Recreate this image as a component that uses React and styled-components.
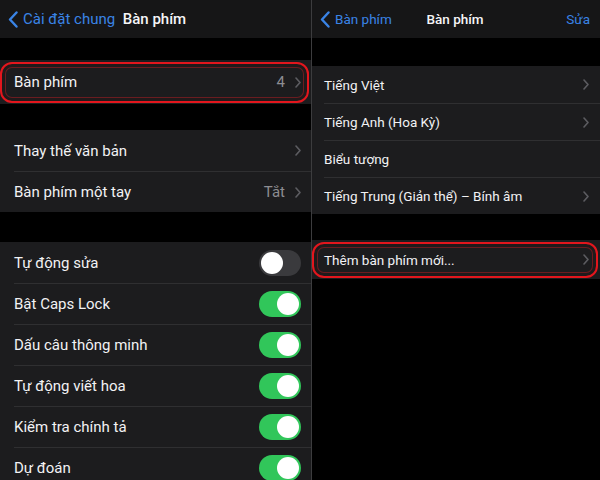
import styled, { createGlobalStyle } from "styled-components";

const GlobalStyle = createGlobalStyle`
  html, body {
    margin: 0;
    padding: 0;
    background: #000;
  }
  body {
    font-family: Roboto, Inter, "Noto Sans", "Liberation Sans", sans-serif;
    -webkit-font-smoothing: antialiased;
  }
`;

const Screen = styled.div`
  display: flex;
  width: 600px;
  height: 480px;
  overflow: hidden;
  background: #000;
`;

const Panel = styled.div`
  display: flex;
  flex-direction: column;
  width: ${(p) => p.$width};
  flex-shrink: 0;
  font-size: ${(p) => p.$size}px;
  color: #f2f2f4;
`;

const Divider = styled.div`
  width: 1px;
  background: #3c3c3e;
  flex-shrink: 0;
`;

const NavBar = styled.div`
  display: grid;
  grid-template-columns: 1fr auto 1fr;
  align-items: center;
  height: 38px;
  padding: 0 10px 0 8px;
  background: #161617;
  flex-shrink: 0;
`;

const BackLink = styled.div`
  display: flex;
  align-items: center;
  gap: 5px;
  color: #3a84e6;
  white-space: nowrap;
`;

const NavTitle = styled.div`
  font-weight: 500;
  color: #f5f5f7;
  white-space: nowrap;
`;

const NavAction = styled.div`
  justify-self: end;
  color: #3a84e6;
`;

const Spacer = styled.div`
  height: ${(p) => p.$h}px;
  flex-shrink: 0;
`;

const Group = styled.div`
  background: #1c1c1e;
  flex-shrink: 0;
`;

const Row = styled.div`
  position: relative;
  display: flex;
  padding-left: ${(p) => p.$pl}px;
`;

const RowBody = styled.div`
  flex: 1;
  display: flex;
  align-items: center;
  justify-content: space-between;
  height: ${(p) => p.$h}px;
  padding-right: ${(p) => p.$pr}px;
  border-top: ${(p) => (p.$first ? "none" : "1px solid #2f2f31")};
  box-sizing: border-box;
`;

const Label = styled.span`
  white-space: nowrap;
`;

const Trailing = styled.div`
  display: flex;
  align-items: center;
  gap: 10px;
  color: #8d8d92;
`;

const Highlight = styled.div`
  position: absolute;
  top: 2px;
  bottom: 1px;
  left: 0;
  right: 2px;
  border: 2px solid #e3161d;
  border-radius: 12px;
  box-shadow: inset 0 0 0 3px #1f1a1b, inset 0 0 0 4px #6a1c20;
  pointer-events: none;
`;

const Toggle = styled.div`
  display: flex;
  justify-content: ${(p) => (p.$on ? "flex-end" : "flex-start")};
  width: 42px;
  height: 26px;
  padding: 2px;
  box-sizing: border-box;
  border-radius: 13px;
  background: ${(p) => (p.$on ? "#31c65a" : "#3a3a3d")};
`;

const Knob = styled.div`
  width: 22px;
  height: 22px;
  border-radius: 50%;
  background: #fff;
`;

function BackChevron() {
  return (
    <svg width="10" height="17" viewBox="0 0 10 17">
      <path
        d="M8.5 1.5 L2 8.5 L8.5 15.5"
        fill="none"
        stroke="#3a84e6"
        strokeWidth="2.4"
        strokeLinecap="round"
        strokeLinejoin="round"
      />
    </svg>
  );
}

function Chevron() {
  return (
    <svg width="6" height="11" viewBox="0 0 6 11">
      <path
        d="M1 1 L5 5.5 L1 10"
        fill="none"
        stroke="#5c5c61"
        strokeWidth="1.6"
        strokeLinecap="round"
        strokeLinejoin="round"
      />
    </svg>
  );
}

function SettingRow({ label, value, chevron, toggle, first, h, pl, pr, highlight }) {
  return (
    <Row $pl={pl}>
      <RowBody $first={first} $h={h} $pr={pr}>
        <Label>{label}</Label>
        <Trailing>
          {value && <span>{value}</span>}
          {chevron && <Chevron />}
          {toggle !== undefined && (
            <Toggle $on={toggle}>
              <Knob />
            </Toggle>
          )}
        </Trailing>
      </RowBody>
      {highlight && <Highlight />}
    </Row>
  );
}

const toggles = [
  ["Tự động sửa", false],
  ["Bật Caps Lock", true],
  ["Dấu câu thông minh", true],
  ["Tự động viết hoa", true],
  ["Kiểm tra chính tả", true],
  ["Dự đoán", true],
];

const keyboards = [
  ["Tiếng Việt", true],
  ["Tiếng Anh (Hoa Kỳ)", true],
  ["Biểu tượng", false],
  ["Tiếng Trung (Giản thể) – Bính âm", true],
];

function App() {
  return (
    <>
      <GlobalStyle />
      <Screen>
        <Panel $width="311px" $size={15}>
          <NavBar>
            <BackLink>
              <BackChevron />
              Cài đặt chung
            </BackLink>
            <NavTitle>Bàn phím</NavTitle>
            <span />
          </NavBar>
          <Spacer $h={22} />
          <Group>
            <SettingRow label="Bàn phím" value="4" chevron first h={44} pl={14} pr={10} highlight />
          </Group>
          <Spacer $h={26} />
          <Group>
            <SettingRow label="Thay thế văn bản" chevron first h={41} pl={14} pr={10} />
            <SettingRow label="Bàn phím một tay" value="Tắt" chevron h={41} pl={14} pr={10} />
          </Group>
          <Spacer $h={30} />
          <Group>
            {toggles.map(([label, on], i) => (
              <SettingRow key={label} label={label} toggle={on} first={i === 0} h={41} pl={14} pr={10} />
            ))}
          </Group>
        </Panel>
        <Divider />
        <Panel $width="288px" $size={13.5}>
          <NavBar>
            <BackLink>
              <BackChevron />
              Bàn phím
            </BackLink>
            <NavTitle>Bàn phím</NavTitle>
            <NavAction>Sửa</NavAction>
          </NavBar>
          <Spacer $h={28} />
          <Group>
            {keyboards.map(([label, chevron], i) => (
              <SettingRow key={label} label={label} chevron={chevron} first={i === 0} h={37} pl={12} pr={11} />
            ))}
          </Group>
          <Spacer $h={26} />
          <Group>
            <SettingRow label="Thêm bàn phím mới..." chevron first h={39} pl={12} pr={11} highlight />
          </Group>
        </Panel>
      </Screen>
    </>
  );
}

export default App;
